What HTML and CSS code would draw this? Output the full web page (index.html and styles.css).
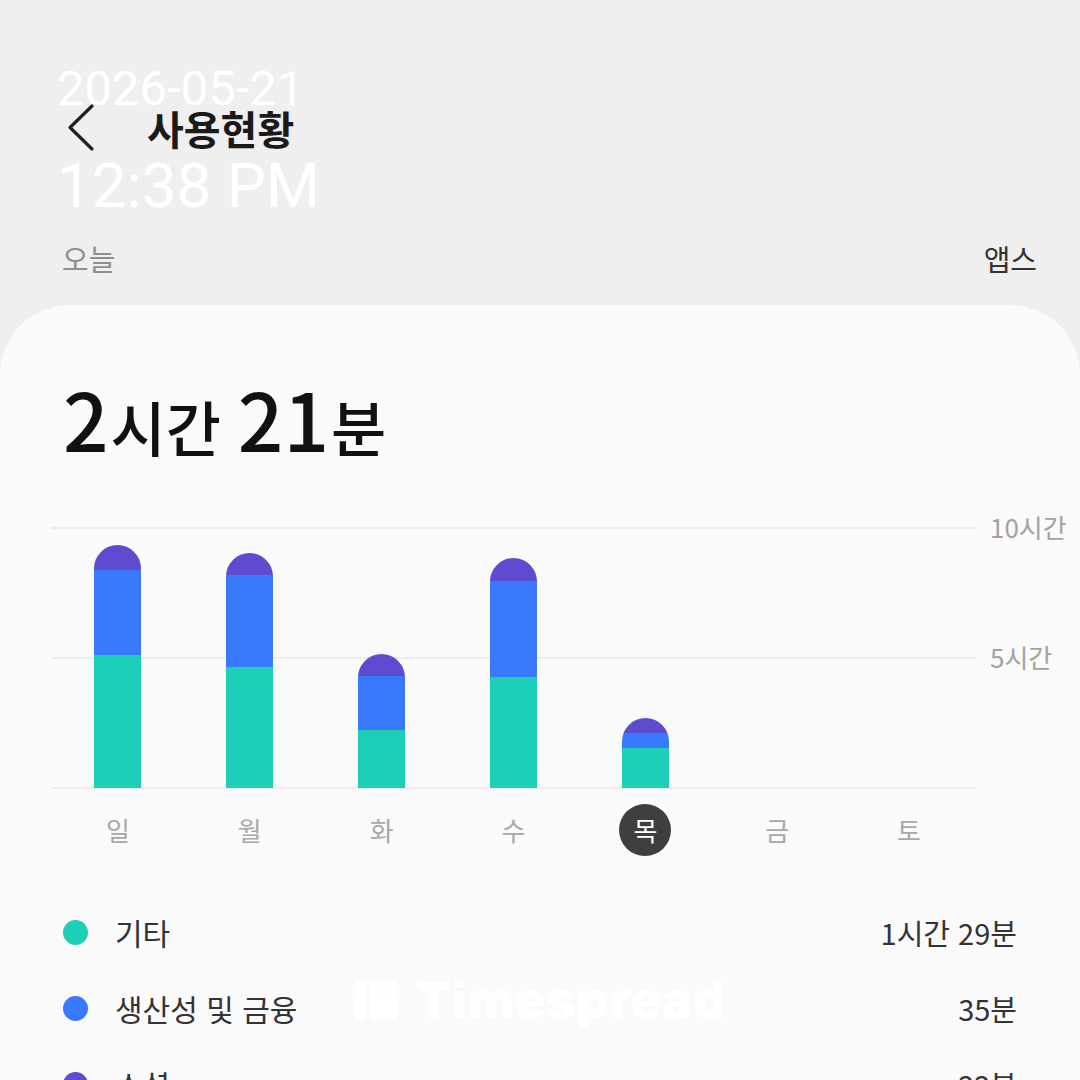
FILE: index.html
```html
<!DOCTYPE html>
<html lang="ko">

<head>
    <meta charset="UTF-8">
    <meta name="viewport" content="width=device-width, initial-scale=1.0">
    <title>사용현황</title>
    <link rel="stylesheet" href="styles.css">
</head>

<body>
    <div class="stamp">
        <div class="stamp-date">2026-05-21</div>
        <div class="stamp-time">12:38 PM</div>
    </div>

    <header class="topbar">
        <svg class="back" width="30" height="50" viewBox="0 0 30 50">
            <path d="M26 3 L4 24.5 L26 46" fill="none" stroke="#222" stroke-width="3.2" stroke-linecap="round" stroke-linejoin="round" />
        </svg>
        <h1>사용현황</h1>
    </header>

    <div class="tabs">
        <span class="tab">오늘</span>
        <span class="tab active">앱스</span>
    </div>

    <main class="card">
        <div class="total">
            <span class="num">2</span><span class="unit">시간</span> <span class="num">21</span><span class="unit">분</span>
        </div>

        <div class="chart">
            <div class="plot">
                <div class="col">
                    <div class="bar">
                        <div class="seg social" style="height:25px"></div>
                        <div class="seg work" style="height:85px"></div>
                        <div class="seg other" style="height:133px"></div>
                    </div>
                </div>
                <div class="col">
                    <div class="bar">
                        <div class="seg social" style="height:22px"></div>
                        <div class="seg work" style="height:92px"></div>
                        <div class="seg other" style="height:121px"></div>
                    </div>
                </div>
                <div class="col">
                    <div class="bar">
                        <div class="seg social" style="height:22px"></div>
                        <div class="seg work" style="height:54px"></div>
                        <div class="seg other" style="height:58px"></div>
                    </div>
                </div>
                <div class="col">
                    <div class="bar">
                        <div class="seg social" style="height:23px"></div>
                        <div class="seg work" style="height:96px"></div>
                        <div class="seg other" style="height:111px"></div>
                    </div>
                </div>
                <div class="col">
                    <div class="bar">
                        <div class="seg social" style="height:15px"></div>
                        <div class="seg work" style="height:15px"></div>
                        <div class="seg other" style="height:40px"></div>
                    </div>
                </div>
                <div class="col"></div>
                <div class="col"></div>
            </div>
            <div class="axis">
                <span>10시간</span>
                <span>5시간</span>
            </div>
        </div>

        <div class="days">
            <span>일</span>
            <span>월</span>
            <span>화</span>
            <span>수</span>
            <span class="today">목</span>
            <span>금</span>
            <span>토</span>
        </div>

        <ul class="legend">
            <li>
                <i class="dot other"></i>
                <span class="name">기타</span>
                <span class="time">1시간 29분</span>
            </li>
            <li>
                <i class="dot work"></i>
                <span class="name">생산성 및 금융</span>
                <span class="time">35분</span>
            </li>
            <li>
                <i class="dot social"></i>
                <span class="name">소셜</span>
                <span class="time">22분</span>
            </li>
        </ul>

        <!-- watermark -->
        <div class="watermark">
            <div class="logo">
                <b></b><b></b><b></b><b></b>
            </div>
            <span>Timespread</span>
        </div>
    </main>
</body>

</html>
```

FILE: styles.css
```css
* {
    box-sizing: border-box;
}

body {
    margin: 0;
    padding-top: 78px;
    background-color: #efefef;
    color: #222;
    font-family: "Noto Sans CJK KR", "Noto Sans", sans-serif;
    overflow: hidden;
    height: 1080px;
}

.stamp {
    position: absolute;
    left: 57px;
    top: 64px;
    color: #fff;
    font-family: Roboto, "Liberation Sans", sans-serif;
    z-index: 5;
}

.stamp-date {
    font-size: 49px;
    line-height: 1;
}

.stamp-time {
    margin-top: 42px;
    font-size: 62px;
    line-height: 1;
}

.topbar {
    display: flex;
    align-items: center;
    height: 100px;
    padding-left: 66px;
}

.topbar h1 {
    margin: 0 0 0 51px;
    font-size: 40px;
    font-weight: 700;
    color: #1a1a1a;
}

.tabs {
    display: flex;
    justify-content: space-between;
    align-items: center;
    height: 60px;
    margin-top: 50px;
    padding: 0 43px 0 62px;
    font-size: 29px;
}

.tab {
    color: #8e8e8e;
}

.tab.active {
    color: #333;
}

.card {
    position: relative;
    margin-top: 17px;
    height: 800px;
    background-color: #fafafa;
    border-radius: 70px 70px 0 0;
    padding-top: 72px;
}

.total {
    padding-left: 63px;
    height: 80px;
    line-height: 1;
    font-size: 60px;
    font-weight: 500;
    color: #111;
    white-space: nowrap;
}

.total .num {
    font-size: 80px;
}

.total .unit {
    margin-left: 2px;
}

.chart {
    display: flex;
    margin-top: 70px;
    padding-left: 52px;
}

.plot {
    display: grid;
    grid-template-columns: repeat(7, 1fr);
    width: 923px;
    height: 262px;
    padding-bottom: 1px;
    background:
        linear-gradient(#ececec, #ececec) 0 0 / 100% 2px no-repeat,
        linear-gradient(#ececec, #ececec) 0 130px / 100% 2px no-repeat,
        linear-gradient(#ececec, #ececec) 0 260px / 100% 2px no-repeat;
}

.col {
    display: flex;
    justify-content: center;
    align-items: flex-end;
}

.bar {
    display: flex;
    flex-direction: column;
    width: 47px;
    border-radius: 24px 24px 0 0;
    overflow: hidden;
}

.seg.other,
.dot.other {
    background-color: #1ecfb7;
}

.seg.work,
.dot.work {
    background-color: #3879fd;
}

.seg.social,
.dot.social {
    background-color: #5f4bcf;
}

.axis {
    display: flex;
    flex-direction: column;
    margin: -18px 0 0 15px;
    font-size: 26px;
    color: #a2a2a2;
}

.axis span {
    height: 130px;
    line-height: 36px;
}

.days {
    display: grid;
    grid-template-columns: repeat(7, 1fr);
    width: 975px;
    margin-top: 15px;
    padding-left: 52px;
    font-size: 26px;
    color: #a8a8a8;
}

.days span {
    justify-self: center;
    width: 52px;
    height: 52px;
    line-height: 52px;
    text-align: center;
}

.days .today {
    background-color: #3f3f3f;
    color: #fff;
    border-radius: 50%;
}

.legend {
    list-style: none;
    margin: 38px 0 0;
    padding: 0 63px;
}

.legend li {
    display: flex;
    align-items: center;
    height: 76px;
    font-size: 30px;
    color: #333;
}

.dot {
    width: 25px;
    height: 25px;
    border-radius: 50%;
    margin-right: 27px;
}

.legend .time {
    margin-left: auto;
    font-size: 29px;
}

.watermark {
    position: absolute;
    left: 355px;
    top: 665px;
    display: flex;
    align-items: center;
    color: #fff;
    font-family: Inter, "Liberation Sans", sans-serif;
    font-weight: 900;
    font-size: 50px;
    letter-spacing: 0.9px;
}

.logo {
    display: grid;
    grid-template-columns: 11px 27px;
    grid-template-rows: 10px 27px;
    gap: 2px 4px;
    margin-right: 19px;
}

.logo b {
    background-color: #fff;
    border-radius: 2px;
}
```
